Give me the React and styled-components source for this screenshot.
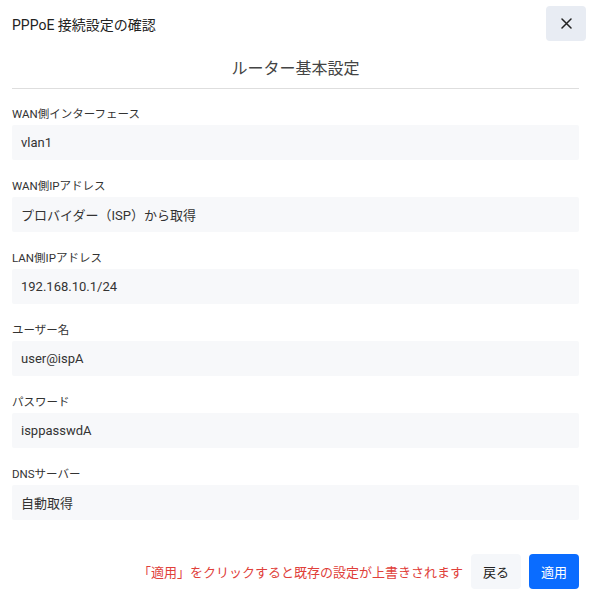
import React from "react";
import styled, { createGlobalStyle } from "styled-components";

const Global = createGlobalStyle`
  html, body { margin: 0; padding: 0; background: #fff; }
  body { font-family: Roboto, "Noto Sans CJK JP", sans-serif; color: #333; }
  * { box-sizing: border-box; }
`;

const Dialog = styled.div`
  width: 593px;
  padding: 6px 7px 16px 12px;
  display: flex;
  flex-direction: column;
`;

const Header = styled.div`
  display: flex;
  align-items: center;
  justify-content: space-between;
`;

const Title = styled.h1`
  margin: 0;
  font-size: 14px;
  font-weight: 400;
  color: #222;
`;

const CloseButton = styled.button`
  width: 40px;
  height: 35px;
  border: none;
  border-radius: 4px;
  background: #e8ecf3;
  display: flex;
  align-items: center;
  justify-content: center;
  padding: 0;
  cursor: pointer;
`;

const Body = styled.div`
  padding-right: 7px;
  display: flex;
  flex-direction: column;
`;

const SectionTitle = styled.h2`
  margin: 16px 0 0;
  padding-bottom: 7px;
  border-bottom: 1px solid #dedede;
  text-align: center;
  font-size: 16px;
  line-height: 24px;
  font-weight: 400;
  color: #444;
`;

const FieldList = styled.div`
  display: flex;
  flex-direction: column;
  gap: 17px;
  margin-top: 16px;
`;

const Field = styled.div`
  display: flex;
  flex-direction: column;
  gap: 2px;
`;

const Label = styled.div`
  font-size: 11.5px;
  line-height: 18px;
  color: #333;
`;

const Value = styled.div`
  height: 35px;
  background: #f7f8fa;
  border-radius: 2px;
  padding: 0 9px;
  display: flex;
  align-items: center;
  font-size: 13px;
  color: #333;
`;

const Footer = styled.div`
  display: flex;
  justify-content: flex-end;
  align-items: center;
  gap: 8px;
  margin-top: 34px;
  padding-right: 7px;
`;

const Warning = styled.span`
  font-size: 13px;
  color: #e0403a;
`;

const Button = styled.button`
  height: 35px;
  width: 50px;
  border: none;
  border-radius: 4px;
  font-family: inherit;
  font-size: 13px;
  cursor: pointer;
  background: ${(p) => (p.$primary ? "#0a6cff" : "#f5f7fa")};
  color: ${(p) => (p.$primary ? "#fff" : "#222")};
`;

const fields = [
  ["WAN側インターフェース", "vlan1"],
  ["WAN側IPアドレス", "プロバイダー（ISP）から取得"],
  ["LAN側IPアドレス", "192.168.10.1/24"],
  ["ユーザー名", "user@ispA"],
  ["パスワード", "isppasswdA"],
  ["DNSサーバー", "自動取得"],
];

export default function App() {
  return (
    <>
      <Global />
      <Dialog>
        <Header>
          <Title>PPPoE 接続設定の確認</Title>
          <CloseButton aria-label="close">
            <svg width="11" height="11" viewBox="0 0 11 11">
              <path d="M1 1L10 10M10 1L1 10" stroke="#222" strokeWidth="1.5" strokeLinecap="round" />
            </svg>
          </CloseButton>
        </Header>
        <Body>
          <SectionTitle>ルーター基本設定</SectionTitle>
          <FieldList>
            {fields.map(([l, v]) => (
              <Field key={l}>
                <Label>{l}</Label>
                <Value>{v}</Value>
              </Field>
            ))}
          </FieldList>
        </Body>
        <Footer>
          <Warning>「適用」をクリックすると既存の設定が上書きされます</Warning>
          <Button>戻る</Button>
          <Button $primary>適用</Button>
        </Footer>
      </Dialog>
    </>
  );
}
